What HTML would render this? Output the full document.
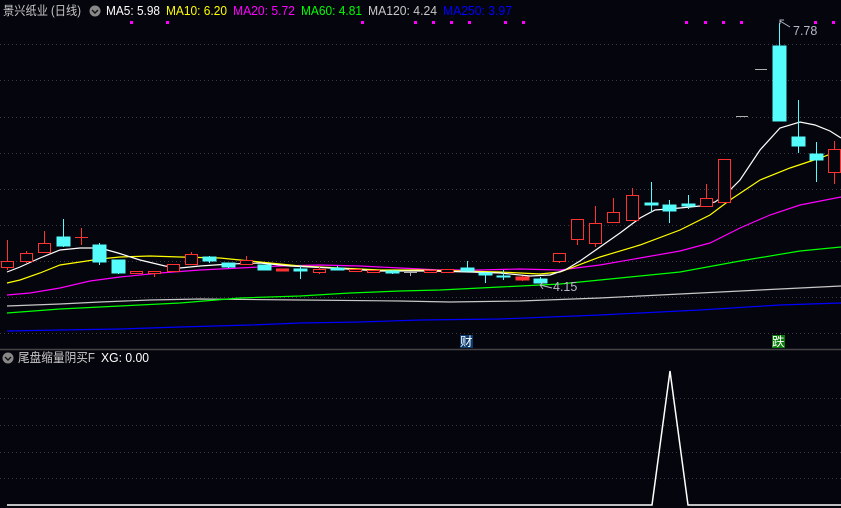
<!DOCTYPE html>
<html><head><meta charset="utf-8"><style>
html,body{margin:0;padding:0;background:#05050d;width:841px;height:508px;overflow:hidden}
svg{display:block}
text{font-family:"Liberation Sans","Noto Sans CJK SC",sans-serif;font-size:12.5px}
</style></head><body>
<svg width="841" height="508" viewBox="0 0 841 508" xmlns="http://www.w3.org/2000/svg">
<rect width="841" height="508" fill="#05050d"/>
<g stroke="#3a3a44" stroke-dasharray="1,3" stroke-width="1">
<line x1="0" y1="44.5" x2="841" y2="44.5"/><line x1="0" y1="80.5" x2="841" y2="80.5"/>
<line x1="0" y1="117.5" x2="841" y2="117.5"/><line x1="0" y1="153.5" x2="841" y2="153.5"/>
<line x1="0" y1="189.5" x2="841" y2="189.5"/><line x1="0" y1="225.5" x2="841" y2="225.5"/>
<line x1="0" y1="261.5" x2="841" y2="261.5"/><line x1="0" y1="297.5" x2="841" y2="297.5"/>
<line x1="0" y1="333.5" x2="841" y2="333.5"/>
<line x1="0" y1="398.5" x2="841" y2="398.5"/><line x1="0" y1="425.5" x2="841" y2="425.5"/>
<line x1="0" y1="452.5" x2="841" y2="452.5"/><line x1="0" y1="478.5" x2="841" y2="478.5"/>
</g>
<line x1="0" y1="349.5" x2="841" y2="349.5" stroke="#444" stroke-width="1.5"/>
<g fill="#ff00ff">
<rect x="130" y="21" width="3" height="3"/><rect x="166" y="21" width="3" height="3"/>
<rect x="361" y="21" width="3" height="3"/><rect x="414" y="21" width="3" height="3"/>
<rect x="432" y="21" width="3" height="3"/><rect x="450" y="21" width="3" height="3"/>
<rect x="468" y="21" width="3" height="3"/><rect x="504" y="21" width="3" height="3"/>
<rect x="522" y="21" width="3" height="3"/>
<rect x="685" y="21" width="3" height="3"/><rect x="704" y="21" width="3" height="3"/>
<rect x="722" y="21" width="3" height="3"/><rect x="740" y="21" width="3" height="3"/>
<rect x="814" y="21" width="3" height="3"/><rect x="832" y="21" width="3" height="3"/>
</g>
<g fill="none" stroke-width="1.2">
<polyline stroke="#0000ff" points="7,331 60,330 120,329 180,327 250,325 300,323 360,322 420,320 500,319 600,315 700,310 780,305 841,303"/>
<polyline stroke="#c8c8c8" points="7,306 60,304 100,302 150,300 200,299 300,300 400,301 450,302 520,301 600,298 700,293 780,289 841,286"/>
<polyline stroke="#00ff00" points="7,313 60,309 120,306 180,303 240,298 300,296 350,293 400,291 440,290 500,287 560,284 620,278 680,272 740,261 800,251 841,247"/>
<polyline stroke="#ff00ff" points="7,295 30,293 60,288 90,281 120,277 160,273 200,270 240,268 280,266 320,265 360,266 400,268 440,270 480,270 520,269 560,270 600,265 640,258 680,251 710,243 740,228 770,215 800,205 841,197"/>
<polyline stroke="#ffff00" points="7,283 20,280 40,273 60,265 80,262 100,259 120,257 150,256 180,257 220,258 260,262 300,266 340,268 380,270 420,270 460,271 500,272 540,274 560,272 600,257 640,245 680,230 710,215 730,200 760,180 790,168 820,158 841,150"/>
<polyline stroke="#ffffff" points="7,272 20,267 40,258 60,250 80,248 100,248 118,253 140,260 165,266 180,268 200,266 230,264 260,263 290,266 330,268 380,271 430,271 470,272 500,273 530,276 550,275 565,270 580,261 600,247 620,233 640,218 655,210 680,208 700,206 715,202 725,195 740,180 760,150 780,128 800,122 815,125 830,131 841,138"/>
</g>
<g stroke="#ff3232" stroke-width="1" fill="#05050d">
<line x1="7.5" y1="240" x2="7.5" y2="270"/><rect x="1.5" y="261.5" width="12" height="6"/>
<line x1="26.5" y1="251" x2="26.5" y2="263"/><rect x="20.5" y="253.5" width="12" height="8"/>
<line x1="44.5" y1="231" x2="44.5" y2="252"/><rect x="38.5" y="243.5" width="12" height="9"/>
<line x1="81.5" y1="228" x2="81.5" y2="245"/><line x1="75" y1="237.5" x2="88" y2="237.5"/>
<rect x="130.5" y="271.5" width="12" height="2"/>
<line x1="154.5" y1="271" x2="154.5" y2="277"/><rect x="148.5" y="271.5" width="12" height="2"/>
<rect x="167.5" y="264.5" width="12" height="7"/>
<line x1="191.5" y1="252" x2="191.5" y2="265"/><rect x="185.5" y="254.5" width="12" height="10"/>
<line x1="246.5" y1="256" x2="246.5" y2="265"/><rect x="240.5" y="260.5" width="12" height="4"/>
<rect x="276.5" y="269" width="12" height="2" fill="#ff3232"/>
<line x1="319.5" y1="267" x2="319.5" y2="274"/><rect x="313.5" y="269.5" width="12" height="3"/>
<rect x="349.5" y="269.5" width="12" height="2"/>
<rect x="367.5" y="270.5" width="12" height="2"/>
<rect x="424.5" y="270.5" width="12" height="2"/>
<rect x="441.5" y="269.5" width="12" height="3"/>
<line x1="522.5" y1="276" x2="522.5" y2="281"/><rect x="516" y="277" width="13" height="3" fill="#ff3232"/>
<line x1="559.5" y1="261" x2="559.5" y2="263"/><rect x="553.5" y="253.5" width="12" height="8"/>
<line x1="577.5" y1="239" x2="577.5" y2="245"/><rect x="571.5" y="219.5" width="12" height="20"/>
<line x1="595.5" y1="206" x2="595.5" y2="247"/><rect x="589.5" y="223.5" width="12" height="20"/>
<line x1="613.5" y1="198" x2="613.5" y2="222"/><rect x="607.5" y="212.5" width="12" height="10"/>
<line x1="632.5" y1="188" x2="632.5" y2="196"/><rect x="626.5" y="195.5" width="12" height="25"/>
<line x1="706.5" y1="184" x2="706.5" y2="198"/><rect x="700.5" y="198.5" width="12" height="8"/>
<rect x="718.5" y="159.5" width="12" height="43"/>
<line x1="834.5" y1="141" x2="834.5" y2="184"/><rect x="828.5" y="149.5" width="12" height="23"/>
</g>
<g stroke="#54fcfc" stroke-width="1" fill="#54fcfc">
<line x1="63.5" y1="219" x2="63.5" y2="247"/><rect x="57" y="237" width="13" height="9"/>
<line x1="99.5" y1="243" x2="99.5" y2="265"/><rect x="93" y="245" width="13" height="17"/>
<line x1="118.5" y1="260" x2="118.5" y2="274"/><rect x="112" y="260" width="13" height="13"/>
<line x1="209.5" y1="256" x2="209.5" y2="263"/><rect x="203" y="257" width="13" height="4"/>
<line x1="228.5" y1="263" x2="228.5" y2="268"/><rect x="222" y="263" width="13" height="4"/>
<rect x="258" y="265" width="13" height="5"/>
<line x1="300.5" y1="265" x2="300.5" y2="279"/><rect x="294" y="269" width="13" height="2"/>
<line x1="337.5" y1="266" x2="337.5" y2="270"/><rect x="331" y="268" width="13" height="2"/>
<line x1="392.5" y1="270" x2="392.5" y2="274"/><rect x="386" y="271" width="13" height="2"/>
<line x1="467.5" y1="261" x2="467.5" y2="271"/><rect x="461" y="268" width="13" height="3"/>
<line x1="485.5" y1="273" x2="485.5" y2="283"/><rect x="479" y="273" width="13" height="2"/>
<line x1="503.5" y1="270" x2="503.5" y2="280"/><rect x="497" y="276" width="13" height="1"/>
<line x1="540.5" y1="277" x2="540.5" y2="283"/><rect x="534" y="279" width="13" height="4"/>
<line x1="651.5" y1="182" x2="651.5" y2="212"/><rect x="645" y="203" width="13" height="2"/>
<line x1="669.5" y1="200" x2="669.5" y2="223"/><rect x="663" y="205" width="13" height="6"/>
<line x1="688.5" y1="195" x2="688.5" y2="209"/><rect x="682" y="204" width="13" height="2"/>
<line x1="779.5" y1="23" x2="779.5" y2="46"/><rect x="773" y="46" width="13" height="75"/>
<line x1="798.5" y1="100" x2="798.5" y2="153"/><rect x="792" y="137" width="13" height="9"/>
<line x1="816.5" y1="142" x2="816.5" y2="182"/><rect x="810" y="154" width="13" height="6"/>
</g>
<g stroke="#b0b0b0" stroke-width="1">
<line x1="404" y1="272.5" x2="417" y2="272.5"/><line x1="410.5" y1="271" x2="410.5" y2="276"/>
<line x1="736" y1="116.5" x2="748" y2="116.5"/>
<line x1="755" y1="69.5" x2="767" y2="69.5"/>
</g>
<text x="793" y="35" fill="#b8b8c8" font-size="12">7.78</text>
<path d="M780 24 L780 20 L784 20 M780 21 L790 27" stroke="#b8b8c8" fill="none"/>
<text x="553" y="291" fill="#b8b8c8" font-size="12">4.15</text>
<path d="M540 285 L552 288 M540 285 L544 282 M540 285 L543 289" stroke="#b8b8c8" fill="none"/>
<rect x="460" y="335" width="13" height="13" fill="#0a3a6e"/>
<text x="460" y="346" fill="#fff" font-size="12">财</text>
<rect x="772" y="335" width="13" height="13" fill="#0a7a0a"/>
<text x="772" y="346" fill="#fff" font-size="12">跌</text>
<text x="3" y="15" fill="#c8c8c8" textLength="78" lengthAdjust="spacingAndGlyphs">景兴纸业 (日线)</text>
<circle cx="95" cy="11" r="5.5" fill="#888"/><path d="M92 10 L95 13 L98 10" stroke="#111" stroke-width="1.4" fill="none"/>
<text x="106" y="15" fill="#ffffff" textLength="54" lengthAdjust="spacingAndGlyphs">MA5: 5.98</text>
<text x="166" y="15" fill="#ffff00" textLength="61" lengthAdjust="spacingAndGlyphs">MA10: 6.20</text>
<text x="233" y="15" fill="#ff00ff" textLength="62" lengthAdjust="spacingAndGlyphs">MA20: 5.72</text>
<text x="301" y="15" fill="#00ff00" textLength="61" lengthAdjust="spacingAndGlyphs">MA60: 4.81</text>
<text x="368" y="15" fill="#c8c8c8" textLength="69" lengthAdjust="spacingAndGlyphs">MA120: 4.24</text>
<text x="443" y="15" fill="#0000ff" textLength="69" lengthAdjust="spacingAndGlyphs">MA250: 3.97</text>
<circle cx="8" cy="358" r="5.5" fill="#888"/><path d="M5 357 L8 360 L11 357" stroke="#111" stroke-width="1.4" fill="none"/>
<text x="18" y="362" fill="#c8c8c8" textLength="77" lengthAdjust="spacingAndGlyphs">尾盘缩量阴买F</text>
<text x="101" y="362" fill="#ffffff" textLength="48" lengthAdjust="spacingAndGlyphs">XG: 0.00</text>
<polyline points="7,505 652,505 670,371 688,505 841,505" fill="none" stroke="#ffffff" stroke-width="1.5"/>
</svg>
</body></html>
